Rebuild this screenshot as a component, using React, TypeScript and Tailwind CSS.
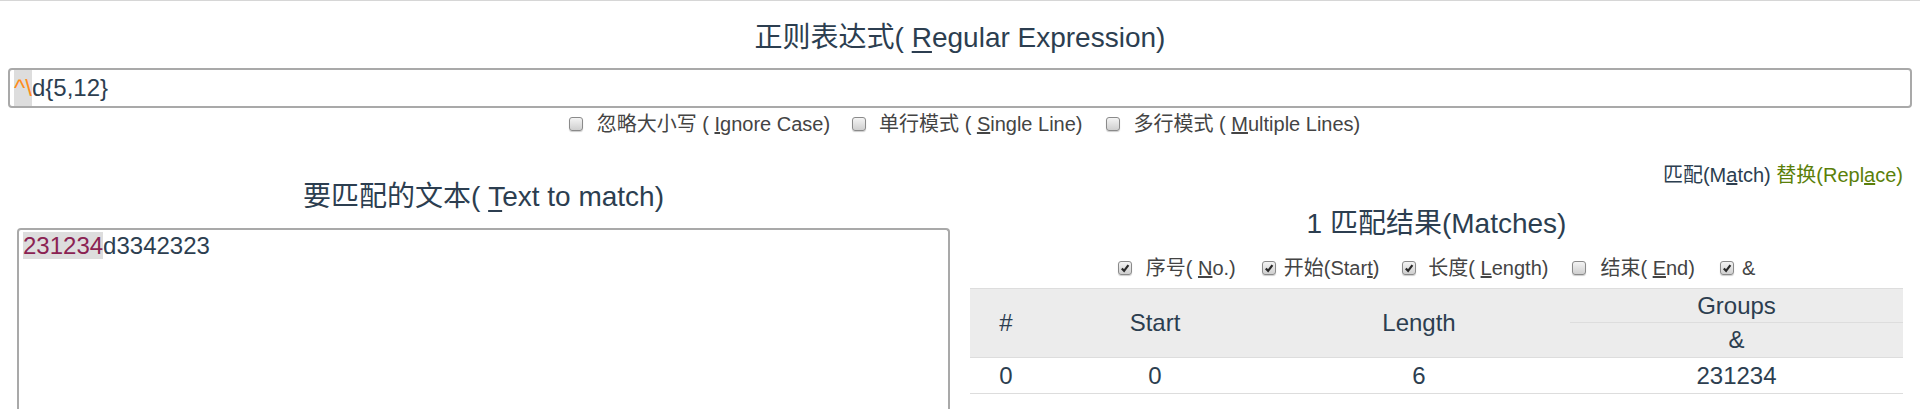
const font = "font-['Liberation_Sans','Noto_Sans_CJK_SC',sans-serif]";

function Box({ checked }: { checked?: boolean }) {
  return (
    <span className="inline-flex h-[14px] w-[14px] shrink-0 items-center justify-center rounded-[3px] border border-[#8a8a8a] bg-linear-to-b from-[#f4f4f4] to-[#cfcfcf] shadow-[0_1px_1px_rgba(0,0,0,0.2)]">
      {checked && (
        <svg viewBox="0 0 10 10" className="h-[10px] w-[10px]">
          <path d="M1.8 5.4 L4.1 7.8 L8.4 2.2" fill="none" stroke="#2a2a2a" strokeWidth="2.2" />
        </svg>
      )}
    </span>
  );
}

function Option({
  checked,
  gap,
  className,
  children,
}: {
  checked?: boolean;
  gap: string;
  className?: string;
  children: React.ReactNode;
}) {
  return (
    <label className={`flex items-center ${className ?? ''}`}>
      <Box checked={checked} />
      <span className={gap}>{children}</span>
    </label>
  );
}

export default function App() {
  return (
    <div className={`${font} min-h-[409px] border-t border-[#d6d6d6] bg-white px-2 text-[#2c3e50]`}>
      <h1 className="mt-[17px] text-center text-[28px] leading-[40px]">
        正则表达式( <u className="decoration-2 underline-offset-[4px]">R</u>egular Expression)
      </h1>
      <div className="mt-[10px] flex h-[40px] items-center rounded-[4px] border-2 border-[#a9a9a9] pl-[4px] text-[24px]">
        <span className="bg-[#dddddd] text-[#ff8c1a]">^\</span>
        <span>d{'{'}5,12{'}'}</span>
      </div>
      <div className="mt-[2px] flex h-[28px] items-center justify-center pl-[9px] text-[20px] leading-[28px] text-[#444]">
        <Option gap="ml-[14px]">
          忽略大小写 ( <u>I</u>gnore Case)
        </Option>
        <Option gap="ml-[13px]" className="ml-[22px]">
          单行模式 ( <u>S</u>ingle Line)
        </Option>
        <Option gap="ml-[14px]" className="ml-[23px]">
          多行模式 ( <u>M</u>ultiple Lines)
        </Option>
      </div>

      <div className="flex">
        <div className="w-1/2 pl-[9px] pr-[10px]">
          <h2 className="mt-[39px] text-center text-[28px] leading-[40px]">
            要匹配的文本( <u className="decoration-2 underline-offset-[4px]">T</u>ext to match)
          </h2>
          <div className="mt-[11px] h-[230px] rounded-t-[4px] border-2 border-b-0 border-[#a9a9a9] pl-[4px] pt-[2px] text-[24px] leading-[28px]">
            <span className="bg-[#dddddd] text-[#8b2252]">231234</span>
            d3342323
          </div>
        </div>

        <div className="w-1/2 pl-[10px] pr-[9px]">
          <div className="mt-[23px] text-right text-[20px] leading-[28px]">
            <span>
              匹配(M<u>a</u>tch)
            </span>{' '}
            <span className="text-[#5b7f0a]">
              替换(Repl<u>a</u>ce)
            </span>
          </div>
          <h2 className="mt-[15px] text-center text-[28px] leading-[40px]">1 匹配结果(Matches)</h2>
          <div className="mt-[10px] flex h-[28px] items-center justify-center text-[20px] leading-[28px] text-[#444]">
            <Option checked gap="ml-[14px]">
              序号( <u>N</u>o.)
            </Option>
            <Option checked gap="ml-[8px]" className="ml-[26px]">
              开始(Star<u>t</u>)
            </Option>
            <Option checked gap="ml-[12px]" className="ml-[23px]">
              长度( <u>L</u>ength)
            </Option>
            <Option gap="ml-[14px]" className="ml-[24px]">
              结束( <u>E</u>nd)
            </Option>
            <Option checked gap="ml-[8px]" className="ml-[25px]">
              &amp;
            </Option>
          </div>
          <table className="mt-[6px] w-full border-collapse border-t border-[#dddddd] text-center text-[24px] leading-none">
            <thead className="bg-[#ececec]">
              <tr className="h-[34px]">
                <th rowSpan={2} className="w-[72px] font-normal">
                  #
                </th>
                <th rowSpan={2} className="w-[226px] font-normal">
                  Start
                </th>
                <th rowSpan={2} className="w-[302px] font-normal">
                  Length
                </th>
                <th className="border-b border-[#dddddd] font-normal">Groups</th>
              </tr>
              <tr className="h-[35px] border-b border-[#dddddd]">
                <th className="font-normal">&amp;</th>
              </tr>
            </thead>
            <tbody>
              <tr className="h-[36px] border-b border-[#dddddd]">
                <td>0</td>
                <td>0</td>
                <td>6</td>
                <td>231234</td>
              </tr>
            </tbody>
          </table>
        </div>
      </div>
    </div>
  );
}
